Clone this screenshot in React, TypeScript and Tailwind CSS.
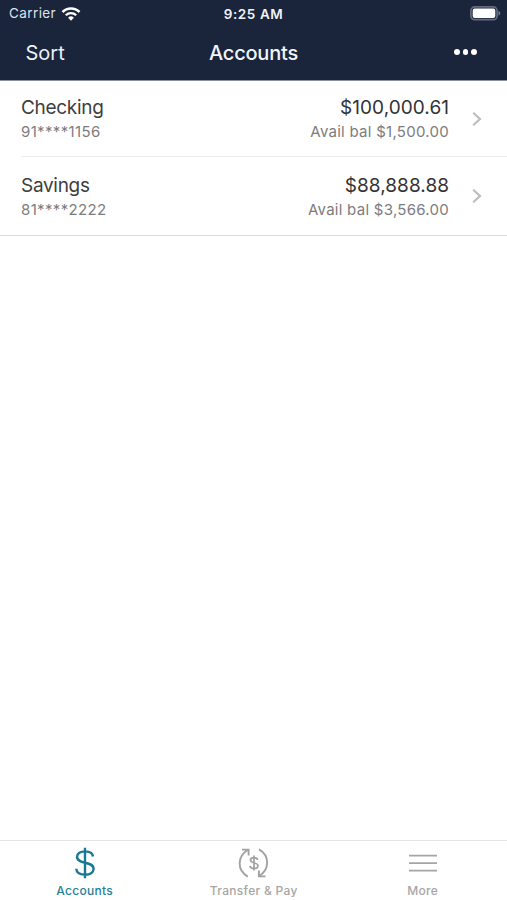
import clsx from "clsx";

interface Account {
  name: string;
  number: string;
  balance: string;
  available: string;
}

const accounts: Account[] = [
  {
    name: "Checking",
    number: "91****1156",
    balance: "$100,000.61",
    available: "$1,500.00",
  },
  {
    name: "Savings",
    number: "81****2222",
    balance: "$88,888.88",
    available: "$3,566.00",
  },
];

function WifiIcon() {
  return (
    <svg width="20" height="14" viewBox="0 0 20 14" fill="none">
      <path
        d="M1.5 5a12 12 0 0 1 17 0"
        stroke="#fff"
        strokeWidth="2.6"
      />
      <path d="M4.8 8.2a7.4 7.4 0 0 1 10.4 0" stroke="#fff" strokeWidth="2.3" />
      <path d="M10 13.7 7.1 10.8a4.1 4.1 0 0 1 5.8 0Z" fill="#fff" />
    </svg>
  );
}

function BatteryIcon() {
  return (
    <svg width="31" height="15" viewBox="0 0 31 15" fill="none">
      <rect
        x="0.9"
        y="0.9"
        width="26.2"
        height="12.8"
        rx="3.8"
        stroke="#656b7e"
        strokeWidth="1.7"
      />
      <rect x="2.7" y="2.6" width="22.6" height="9.3" rx="2" fill="#fff" />
      <path d="M28.5 5v4.6c1-.4 1.7-1.2 1.7-2.3S29.5 5.4 28.5 5Z" fill="#7d8290" />
    </svg>
  );
}

function DollarIcon() {
  return (
    <svg width="20" height="32" viewBox="0 0 20 32" fill="none">
      <path
        d="M10 .8v30.4M18 9.5C17.6 6 14.5 4.4 10 4.4S2.1 6.4 2.1 10c0 7.8 16.5 3.6 16.5 11.8 0 3.8-3.6 5.9-8.6 5.9S1.5 25.7 1.3 21.8"
        stroke="#177a93"
        strokeWidth="2.4"
      />
    </svg>
  );
}

function TransferIcon() {
  return (
    <svg
      width="32"
      height="32"
      viewBox="0 0 32 32"
      fill="none"
      stroke="#a2a2a2"
      strokeWidth="1.9"
    >
      <path d="M9.8 29.6C-1.3 23.2-.9 9.4 10 2.8M4 2.6h6.600v6" />
      <path d="M21 2.4c11.100 6.400 10.700 20.200-.2 26.800M27.500 29.400h-6.600v-6" />
      <path
        d="M16 8.600v15M19.600 12.900c-.3-1.500-1.600-2.200-3.600-2.200s-3.500.8-3.500 2.400c0 3.800 7.500 2 7.500 5.600 0 1.900-1.700 2.800-4 2.800s-3.800-.9-4-2.700"
        strokeWidth="1.700"
      />
    </svg>
  );
}

function MenuIcon() {
  return (
    <svg width="30" height="32" viewBox="0 0 30 32" stroke="#a5a5a5">
      <path d="M1 8.7h28M1 16.2h28M1 23.700h28" strokeWidth="1.7" />
    </svg>
  );
}

const tabs = [
  { label: "Accounts", icon: <DollarIcon />, active: true },
  { label: "Transfer & Pay", icon: <TransferIcon />, active: false },
  { label: "More", icon: <MenuIcon />, active: false },
];

function AccountRow({ account, last }: { account: Account; last: boolean }) {
  return (
    <div
      className={clsx(
        last ? "h-[78px]" : "h-[76px] border-b border-[#ececec]",
        "ml-[21px] flex items-center",
      )}
    >
      <div className="flex flex-1 flex-col pt-[3px]">
        <div className="text-[19px] leading-6 tracking-[-0.3px] text-[#3e3e40]">
          {account.name}
        </div>
        <div className="text-[15px] leading-6 tracking-[0.35px] text-[#7c7c7e]">
          {account.number}
        </div>
      </div>
      <div className="flex flex-col items-end pt-[3px]">
        <div className="text-[19px] leading-6 tracking-[0.05px] text-[#333335]">
          {account.balance}
        </div>
        <div className="text-[15px] leading-6 tracking-[0.27px] text-[#7c7c7e]">
          Avail bal {account.available}
        </div>
      </div>
      <svg
        width="12"
        height="16"
        viewBox="0 0 12 16"
        fill="none"
        className="mr-[24px] ml-[22px]"
      >
        <path d="m2.2 1.7 6.8 6.3-6.8 6.3" stroke="#bdbdbf" strokeWidth="2.2" />
      </svg>
    </div>
  );
}

export default function App() {
  return (
    <div className="flex h-screen flex-col bg-white font-['Inter',sans-serif]">
      <header className="h-[81px] border-b border-[#8b90a0] bg-[#1a243b] text-white">
        <div className="grid h-[27px] grid-cols-3 items-center">
          <div className="flex items-center gap-[5px] pl-[9px] text-[13.5px] tracking-[0.4px] text-[#dde3ee]">
            Carrier
            <WifiIcon />
          </div>
          <div className="pt-px text-center text-[13.5px] font-semibold tracking-[0.6px] text-[#eff3f8]">
            9:25 AM
          </div>
          <div className="flex justify-end pr-[6px]">
            <BatteryIcon />
          </div>
        </div>
        <div className="grid h-[51px] grid-cols-3 items-center">
          <div className="pl-[25.5px] text-[20px] text-[#eaf1f8]">Sort</div>
          <div className="text-center text-[20px] font-medium tracking-[-0.2px] text-[#eff5fa]">
            Accounts
          </div>
          <div className="flex justify-end gap-[3px] pr-[30.5px] pb-px">
            <span className="size-[5.5px] rounded-full bg-white" />
            <span className="size-[5.5px] rounded-full bg-white" />
            <span className="size-[5.5px] rounded-full bg-white" />
          </div>
        </div>
      </header>
      <main className="flex-1">
        <div className="border-b border-[#dadada]">
          {accounts.map((account, idx) => (
            <AccountRow
              key={account.number}
              account={account}
              last={idx === accounts.length - 1}
            />
          ))}
        </div>
      </main>
      <nav className="grid h-[60px] grid-cols-3 border-t border-[#e4e4e4]">
        {tabs.map((tab) => (
          <div
            key={tab.label}
            className={clsx(
              tab.active ? "text-[#26809a]" : "text-[#a6a6a6]",
              "flex flex-col items-center pt-[6px] text-[12px] font-medium tracking-[0.3px]",
            )}
          >
            {tab.icon}
            <span className="mt-[3px] pl-[0.5px] leading-[18px]">
              {tab.label}
            </span>
          </div>
        ))}
      </nav>
    </div>
  );
}
